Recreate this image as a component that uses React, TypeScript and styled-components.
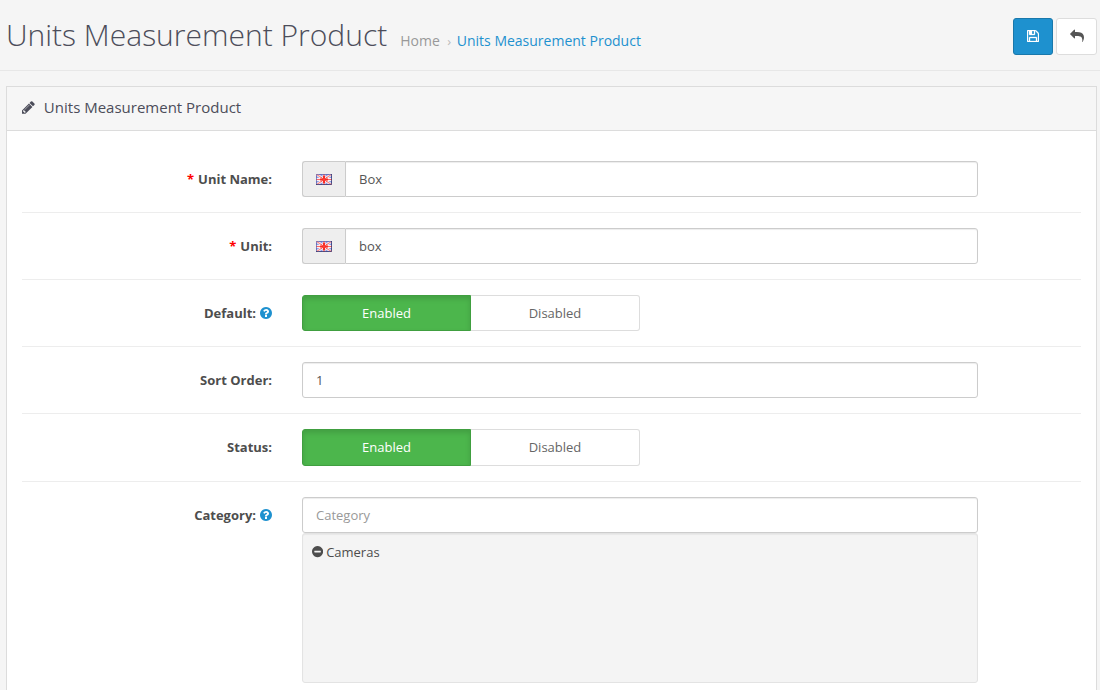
import React from "react";
import styled, { createGlobalStyle } from "styled-components";

const GlobalStyle = createGlobalStyle`
  *, *::before, *::after { box-sizing: border-box; }
  html, body { margin: 0; height: 690px; overflow: hidden; }
  body {
    background: #f5f5f5;
    color: #555;
    font: 13px/20px "Open Sans", "Noto Sans", sans-serif;
  }
  input, button { font: inherit; }
`;

const Page = styled.div`
  height: 690px;
  overflow: hidden;
`;

const Header = styled.header`
  display: flex;
  align-items: flex-start;
  justify-content: space-between;
  height: 71px;
  padding: 18px 3px 0 6px;
  border-bottom: 1px solid #e7e7e7;
`;

const Heading = styled.div`
  display: flex;
  align-items: baseline;
`;

const Title = styled.h1`
  margin: 0;
  font-size: 30px;
  font-weight: 300;
  line-height: 34px;
  color: #4c4d5a;
  white-space: nowrap;
`;

const Breadcrumb = styled.nav`
  display: flex;
  align-items: baseline;
  margin-left: 13px;
  font-size: 14px;
  white-space: nowrap;
`;

const Crumb = styled.a<{ $current?: boolean }>`
  color: ${(p) => (p.$current ? "#1e91cf" : "#999")};
`;

const Separator = styled.span`
  width: 17px;
  padding-left: 2px;
  text-align: center;
  font-size: 13px;
  color: #bbb;
`;

const Actions = styled.div`
  display: flex;
  gap: 3px;
`;

const ActionButton = styled.button<{ $primary?: boolean }>`
  display: flex;
  align-items: center;
  justify-content: center;
  width: ${(p) => (p.$primary ? 40 : 41)}px;
  height: 37px;
  padding: 0 0 1px;
  border: 1px solid ${(p) => (p.$primary ? "#1978ab" : "#ddd")};
  border-radius: 3px;
  background: ${(p) => (p.$primary ? "#1e91cf" : "#fff")};
  color: ${(p) => (p.$primary ? "#fff" : "#555")};
`;

const Panel = styled.section`
  margin: 15px 3px 0 6px;
  height: 640px;
  border: 1px solid #dcdcdc;
  background: #fff;
`;

const PanelHeading = styled.div`
  display: flex;
  align-items: flex-start;
  gap: 9px;
  height: 44px;
  padding: 10px 15px 0;
  border-bottom: 1px solid #dcdcdc;
  background: #f6f6f6;
  font-size: 15px;
  color: #4c4d5a;

  svg {
    margin-top: 4px;
  }
`;

const Form = styled.form`
  padding: 15px;
`;

const FormRow = styled.div`
  display: flex;
  gap: 30px;
  padding: 15px 0;

  & + & {
    border-top: 1px solid #ededed;
  }
`;

const Label = styled.label`
  display: flex;
  align-items: center;
  justify-content: flex-end;
  gap: 4px;
  width: 250px;
  height: 36px;
  font-weight: 700;
  white-space: nowrap;
  color: #4d4d4d;
`;

const Required = styled.span`
  color: #f00;
`;

const Help = styled.span`
  display: flex;
  color: #1e91cf;
`;

const Field = styled.div`
  width: 676px;
`;

const InputGroup = styled.div`
  display: flex;
`;

const Addon = styled.span`
  display: flex;
  align-items: center;
  justify-content: center;
  width: 43px;
  height: 36px;
  border: 1px solid #ccc;
  border-right: 0;
  border-radius: 3px 0 0 3px;
  background: #eee;
`;

const Input = styled.input<{ $grouped?: boolean }>`
  display: block;
  flex: 1;
  width: 100%;
  min-width: 0;
  height: 36px;
  padding: 8px 13px;
  border: 1px solid #ccc;
  border-radius: ${(p) => (p.$grouped ? "0 3px 3px 0" : "3px")};
  background: #fff;
  box-shadow: inset 0 1px 1px rgba(0, 0, 0, 0.075);
  color: #555;
  outline: 0;

  &::placeholder {
    color: #999;
    opacity: 1;
  }
`;

const Toggle = styled.div<{ $height: number }>`
  display: flex;
  width: 338px;
  height: ${(p) => p.$height}px;
`;

const ToggleOption = styled.button<{ $active?: boolean }>`
  display: flex;
  justify-content: center;
  width: 169px;
  padding: 7px 0 0;
  border: 1px solid ${(p) => (p.$active ? "#409f40" : "#ddd")};
  border-left-width: ${(p) => (p.$active ? 1 : 0)}px;
  border-radius: ${(p) => (p.$active ? "3px 0 0 3px" : "0 3px 3px 0")};
  background: ${(p) => (p.$active ? "#4cb64c" : "#fff")};
  box-shadow: ${(p) => (p.$active ? "inset 0 3px 5px rgba(0, 0, 0, 0.125)" : "none")};
  color: ${(p) => (p.$active ? "#fff" : "#666")};
`;

const Well = styled.div`
  height: 150px;
  padding: 8px 9px;
  border: 1px solid #e3e3e3;
  border-radius: 3px;
  background: #f4f4f4;
  box-shadow: inset 0 1px 1px rgba(0, 0, 0, 0.05);
`;

const WellItem = styled.div`
  display: flex;
  align-items: center;
  gap: 3px;
  color: #4d4d4d;
`;

const Glyph = styled.svg`
  display: block;
  flex: none;
  fill: currentColor;
`;

const disc =
  "q0 209-103 385.5t-279.5 279.5-385.5 103-385.5-103-279.5-279.5-103-385.5 103-385.5 279.5-279.5 385.5-103 385.5 103 279.5 279.5 103 385.5z";

const PencilIcon = () => (
  <Glyph width="12.86" height="12.86" viewBox="0 0 1536 1536">
    <path d="M363 1408l91-91-235-235-91 91v107h128v128h107zM886 480q0-22-22-22-10 0-17 7l-542 542q-7 7-7 17 0 22 22 22 10 0 17-7l542-542q7-7 7-17zM832 288l416 416-832 832h-416v-416zM1515 384q0 53-37 90l-166 166-416-416 166-165q36-38 90-38 53 0 91 38l235 234q37 39 37 91z" />
  </Glyph>
);

const SaveIcon = () => (
  <Glyph width="12" height="12" viewBox="0 0 1536 1536">
    <path
      stroke="currentColor"
      strokeWidth="40"
      d="M384 1408h768v-384h-768v384zM1280 1408h128v-896q0-14-10-38.5t-20-34.5l-281-281q-10-10-34-20t-39-10v416q0 40-28 68t-68 28h-576q-40 0-68-28t-28-68v-416h-128v1280h128v-416q0-40 28-68t68-28h832q40 0 68 28t28 68v416zM896 480v-320q0-13-9.5-22.5t-22.5-9.5h-192q-13 0-22.5 9.5t-9.5 22.5v320q0 13 9.5 22.5t22.5 9.5h192q13 0 22.5-9.5t9.5-22.5zM1536 512v928q0 40-28 68t-68 28h-1344q-40 0-68-28t-28-68v-1344q0-40 28-68t68-28h928q40 0 88 20t76 48l280 280q28 28 48 76t20 88z"
    />
  </Glyph>
);

const ReplyIcon = () => (
  <Glyph width="14" height="14" viewBox="0 0 1792 1792">
    <path d="M1792 1120q0 166-127 451-3 7-10.5 24t-13.5 30-13 22q-12 17-28 17-15 0-23.5-10t-8.5-25q0-9 2.5-26.500t2.500-23.500q5-68 5-123 0-101-17.500-181t-48.500-138.500-80-101-105.500-69.500-133-42.500-154-21.500-175.500-6h-224v256q0 26-19 45t-45 19-45-19l-512-512q-19-19-19-45t19-45l512-512q19-19 45-19t45 19 19 45v256h224q713 0 875 403 53 134 53 333z" />
  </Glyph>
);

const QuestionIcon = () => (
  <Glyph width="12" height="12" viewBox="128 128 1536 1536">
    <path
      d={
        "M1024 1376v-192q0-14-9-23t-23-9h-192q-14 0-23 9t-9 23v192q0 14 9 23t23 9h192q14 0 23-9t9-23zm256-672q0-88-55.5-163t-138.5-116-170-41q-243 0-371 213-15 24 8 42l132 100q7 6 19 6 16 0 25-12 53-68 86-92 34-24 86-24 48 0 85.5 26t37.5 59q0 38-20 61t-68 45q-63 28-115.5 86.5t-52.5 125.5v36q0 14 9 23t23 9h192q14 0 23-9t9-23q0-19 21.5-49.5t54.5-49.5q32-18 49-28.5t46-35 44.5-48 28-60.5 12.5-81zm384 192" +
        disc
      }
    />
  </Glyph>
);

const MinusIcon = () => (
  <Glyph width="11.14" height="11.14" viewBox="128 128 1536 1536">
    <path
      d={
        "M1344 960v-128q0-26-19-45t-45-19h-768q-26 0-45 19t-19 45v128q0 26 19 45t45 19h768q26 0 45-19t19-45zm320-64" +
        disc
      }
    />
  </Glyph>
);

const FlagIcon = () => (
  <Glyph width="16" height="11" viewBox="0 0 16 11">
    <rect width="16" height="11" fill="#8f9fe6" />
    <path d="M0 0L16 11M16 0L0 11" stroke="#fff" strokeWidth="2.6" />
    <path d="M0 0L16 11M16 0L0 11" stroke="#f58a8a" strokeWidth="1.3" />
    <path d="M8 0V11M0 5.5H16" stroke="#fdeeee" strokeWidth="3" />
    <path d="M8 0V11" stroke="#f88080" strokeWidth="2" />
    <path d="M0 5.5H16" stroke="#f66" strokeWidth="1" />
    <path d="M8 2V9M4 5.5H12" stroke="#f92b24" strokeWidth="2" />
    <path d="M5 3.500L11 7.500M11 3.500L5 7.500" stroke="#fa4a44" strokeWidth="0.900" />
    <path d="M0.500 11V0.500H16" fill="none" stroke="#5a5ba8" strokeOpacity="0.7" />
    <path d="M0 10.500H15.500V0" fill="none" stroke="#35356f" strokeOpacity="0.8" />
  </Glyph>
);

const FieldLabel = ({ text, required, help }: { text: string; required?: boolean; help?: boolean }) => (
  <Label>
    {required && <Required>*</Required>}
    {text}
    {help && (
      <Help>
        <QuestionIcon />
      </Help>
    )}
  </Label>
);

const LocalizedInput = ({ value }: { value: string }) => (
  <InputGroup>
    <Addon>
      <FlagIcon />
    </Addon>
    <Input $grouped defaultValue={value} />
  </InputGroup>
);

const EnabledToggle = ({ height }: { height: number }) => (
  <Toggle $height={height}>
    <ToggleOption type="button" $active>
      Enabled
    </ToggleOption>
    <ToggleOption type="button">Disabled</ToggleOption>
  </Toggle>
);

export default function App() {
  return (
    <Page>
      <GlobalStyle />
      <Header>
        <Heading>
          <Title>Units Measurement Product</Title>
          <Breadcrumb>
            <Crumb>Home</Crumb>
            <Separator>›</Separator>
            <Crumb $current>Units Measurement Product</Crumb>
          </Breadcrumb>
        </Heading>
        <Actions>
          <ActionButton $primary aria-label="Save">
            <SaveIcon />
          </ActionButton>
          <ActionButton aria-label="Back">
            <ReplyIcon />
          </ActionButton>
        </Actions>
      </Header>
      <Panel>
        <PanelHeading>
          <PencilIcon />
          Units Measurement Product
        </PanelHeading>
        <Form>
          <FormRow>
            <FieldLabel text="Unit Name:" required />
            <Field>
              <LocalizedInput value="Box" />
            </Field>
          </FormRow>
          <FormRow>
            <FieldLabel text="Unit:" required />
            <Field>
              <LocalizedInput value="box" />
            </Field>
          </FormRow>
          <FormRow>
            <FieldLabel text="Default:" help />
            <Field>
              <EnabledToggle height={36} />
            </Field>
          </FormRow>
          <FormRow>
            <FieldLabel text="Sort Order:" />
            <Field>
              <Input defaultValue="1" />
            </Field>
          </FormRow>
          <FormRow>
            <FieldLabel text="Status:" />
            <Field>
              <EnabledToggle height={37} />
            </Field>
          </FormRow>
          <FormRow>
            <FieldLabel text="Category:" help />
            <Field>
              <Input placeholder="Category" />
              <Well>
                <WellItem>
                  <MinusIcon />
                  Cameras
                </WellItem>
              </Well>
            </Field>
          </FormRow>
        </Form>
      </Panel>
    </Page>
  );
}
